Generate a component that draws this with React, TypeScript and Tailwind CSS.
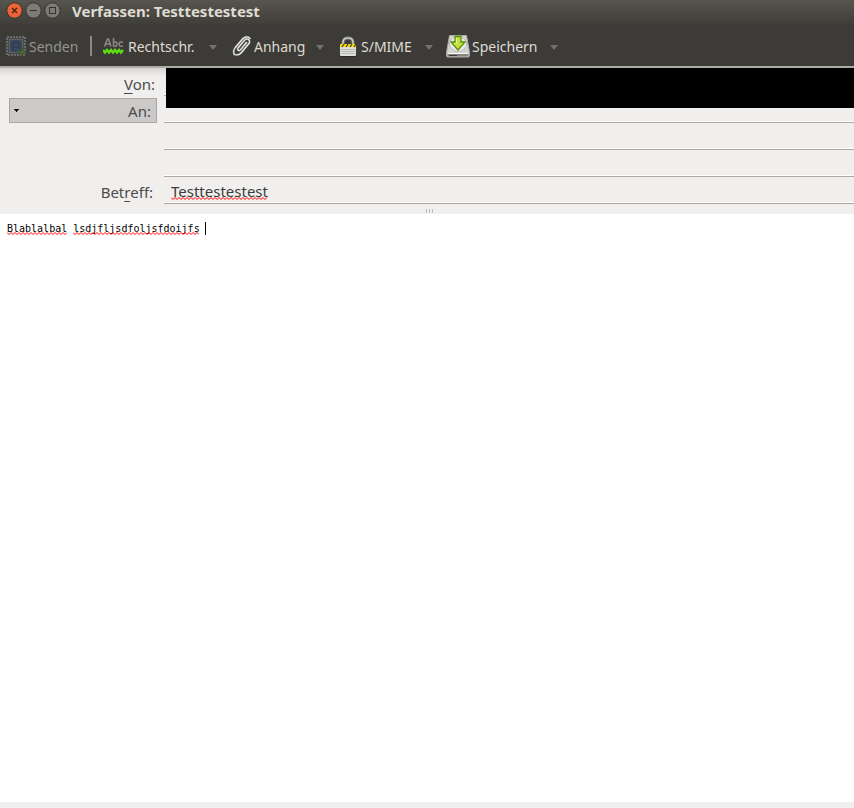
import React, { useState } from 'react';

const SendIcon = () => (
  <svg width="20" height="20" viewBox="0 0 20 20" className="shrink-0">
    <rect x="1" y="1" width="18" height="18" fill="#4a4945" stroke="#6b6964" strokeWidth="2" strokeDasharray="2 1" />
    <rect x="3.500" y="3.500" width="13" height="13" fill="#414d5e" stroke="#566273" />
    <path
      d="M12.500 7.500v4q.5 1.500 2 .5 1.200-5.500-3-7-5-.8-6 4 0 5.500 4.500 6"
      fill="none"
      stroke="#2c3b52"
      strokeWidth="1.200"
    />
    <circle cx="10" cy="9.500" r="2.300" fill="none" stroke="#2c3b52" strokeWidth="1.200" />
    <path d="M12 15h3.500v-3l4.500 4.300-4.500 3.700v-2.500H12z" fill="#4b6636" stroke="#3a502b" strokeWidth="0.700" />
  </svg>
);

const SpellIcon = () => (
  <svg width="21" height="18" viewBox="0 0 21 18" className="shrink-0">
    <g fill="none" stroke="#8b8a87" strokeWidth="1.500">
      <path d="M1.500 9.500L4.500 2h1L8 9.500M3 7h4" />
      <path d="M10.500 1v8.500M10.500 5h2q1.500 0 1.500 2t-1.500 2.300h-2" />
      <path d="M20 5h-2q-1.800 0-1.800 2.200T18 9.300h2" />
    </g>
    <path d="M0 13l2 2.500 2-2.500 2 2.500 2-2.500 2 2.500 2-2.500 2 2.500 2-2.500 2 2.500 2-2.500" fill="none" stroke="#5fdc13" strokeWidth="2.400" />
  </svg>
);

const ClipIcon = () => (
  <svg width="20" height="22" viewBox="0 0 20 22" className="shrink-0">
    <g fill="none" strokeLinecap="round" strokeLinejoin="round">
      <path
        d="M14.500 7.500l-6 7.300q-1.200 1.200-2.300.4t-.2-2.200l7-8.300q1.800-1.500 3.500-.2t.8 3.500l-7.800 9.500q-2 2.300-4.500 2.500l-2.800-.5-.6-3q.2-2 1.700-4l7.700-9q2.500-2.300 5-1.500l2 1.500"
        stroke="#6f6e69"
        strokeWidth="2.200"
      />
      <path
        d="M14.500 7.500l-6 7.300q-1.200 1.200-2.300.4t-.2-2.200l7-8.300q1.800-1.500 3.500-.2t.8 3.500l-7.800 9.500q-2 2.300-4.500 2.500l-2.800-.5-.6-3q.2-2 1.700-4l7.700-9q2.500-2.300 5-1.500l2 1.500"
        stroke="#eeeeec"
        strokeWidth="1.200"
      />
    </g>
  </svg>
);

const LockIcon = () => (
  <svg width="18" height="21" viewBox="0 0 18 21" className="shrink-0">
    <path d="M4 9V6.500Q4 2 9 2t5 4.500V9" fill="none" stroke="#858580" strokeWidth="2.800" />
    <path d="M4 9V6.500Q4 2 9 2t5 4.500V9" fill="none" stroke="#d7d7d3" strokeWidth="1.200" />
    <rect x="1" y="8" width="16" height="12" rx="1" fill="#dededb" />
    <path d="M2 13.500h14M2 15.500h14M2 17.500h14" stroke="#b9b8b4" />
    <rect x="1" y="8" width="16" height="3" fill="#f3d91b" />
    <path d="M3 11l2-3M7 11l2-3M11 11l2-3M15 11l2-3" stroke="#4b4414" strokeWidth="1.300" />
    <path d="M1 20.500h16" stroke="#292825" />
  </svg>
);

const SaveIcon = () => (
  <svg width="24" height="23" viewBox="0 0 24 23" className="shrink-0">
    <path d="M3.500.5h17l3 17v3q0 1.500-1.500 1.500H2Q.5 22 .5 20.500v-3z" fill="#d5d5d2" stroke="#aaa9a6" />
    <ellipse cx="12" cy="9" rx="8.500" ry="7.500" fill="#e8e8e6" stroke="#babab7" />
    <path d="M1.500 18.500h21v2q0 1-1 1h-19q-1 0-1-1z" fill="#85847f" />
    <path d="M2 18.500h20" stroke="#f5f5f3" />
    <path d="M3 20.500h8" stroke="#3d3c38" />
    <path d="M9 1.500h6v5.500h4l-7 8-7-8h4z" fill="#c6df3c" stroke="#55920c" strokeWidth="1.300" />
    <path d="M10.500 3v5.500H8.500" fill="none" stroke="#eaf49b" />
  </svg>
);

const DropArrow = () => (
  <svg width="8" height="5" viewBox="0 0 8 5">
    <path d="M0 0h8L4 5z" fill="#73716c" />
  </svg>
);

interface ToolProps {
  icon: React.ReactNode;
  label: string;
  className: string;
  gap: string;
}

const Tool: React.FC<ToolProps> = ({ icon, label, className, gap }) => (
  <div className={`flex items-center justify-between ${className}`}>
    <button type="button" className={`flex h-8 items-center text-[#dfdbd2] ${gap}`}>
      {icon}
      <span className="pt-[2px]">{label}</span>
    </button>
    <button type="button" aria-label={`${label} Optionen`} className="flex h-8 items-center pt-[2px]">
      <DropArrow />
    </button>
  </div>
);

// zigzag line drawn under misspelled words
const Squiggle = ({ width, className = '' }: { width: number; className?: string }) => {
  const points = [];
  for (let x = 0; x <= width; x += 2) {
    points.push(`${x},${x % 4 === 0 ? 0.5 : 2.5}`);
  }
  return (
    <svg width={width} height="3" className={`shrink-0 ${className}`} aria-hidden="true">
      <polyline points={points.join(' ')} fill="none" stroke="#ff0000" strokeWidth="1" />
    </svg>
  );
};

const fieldClass =
  'block h-[27px] w-full border-b border-[#aaa9a7] bg-transparent px-[7px] pt-[2px] text-[#3c3c3c] shadow-[inset_0_-1px_0_#ffffff] outline-none';

export default function App() {
  const [subject, setSubject] = useState('Testtestestest');
  const [body, setBody] = useState('Blablalbal lsdjfljsdfoljsfdoijfs ');
  const [recipients, setRecipients] = useState(['', '', '']);

  const setRecipient = (index: number, value: string) =>
    setRecipients(recipients.map((r, i) => (i === index ? value : r)));

  return (
    <div className="flex min-h-screen flex-col bg-white font-['Noto_Sans',sans-serif] text-[14px] leading-5">
      <header className="border-b-2 border-[#aeaca7] bg-[#3c3b37]">
        <div className="flex h-6 items-center gap-[11px] bg-linear-to-b from-[#56554e] to-[#3f3e39] px-[6px] pb-[3px]">
          <div className="flex gap-[2px]">
            <button type="button" aria-label="Schließen">
              <svg width="17" height="17" viewBox="0 0 17 17">
                <circle cx="8.500" cy="8.500" r="7.700" fill="#ee6338" stroke="#34332e" />
                <path d="M6 6l5 5M11 6l-5 5" stroke="#4a2315" strokeWidth="1.400" />
              </svg>
            </button>
            <button type="button" aria-label="Minimieren">
              <svg width="17" height="17" viewBox="0 0 17 17">
                <circle cx="8.500" cy="8.500" r="7.700" fill="#7d7b73" stroke="#34332e" />
                <path d="M5 8.500h7" stroke="#33322e" />
              </svg>
            </button>
            <button type="button" aria-label="Maximieren">
              <svg width="17" height="17" viewBox="0 0 17 17">
                <circle cx="8.500" cy="8.500" r="7.700" fill="#7d7b73" stroke="#34332e" />
                <rect x="5.500" y="5.500" width="6" height="6" fill="none" stroke="#33322e" />
              </svg>
            </button>
          </div>
          <h1 className="text-[15px] font-bold text-[#dfdbd2]">Verfassen: Testtestestest</h1>
        </div>
        <div className="flex h-[42px] items-center pl-[6px] pt-[2px]">
          <button type="button" disabled className="flex h-8 w-[84px] items-center gap-[3px] text-[#96938c]">
            <SendIcon />
            <span className="pt-[2px]">Senden</span>
          </button>
          <div className="mr-[11px] h-5 w-[2px] bg-[#8b8984]" />
          <div className="flex gap-[15px]">
            <Tool icon={<SpellIcon />} label="Rechtschr." className="w-[114px]" gap="gap-1" />
            <Tool icon={<ClipIcon />} label="Anhang" className="w-[92px]" gap="gap-[2px]" />
            <Tool icon={<LockIcon />} label="S/MIME" className="w-[94px]" gap="gap-1" />
            <Tool icon={<SaveIcon />} label="Speichern" className="-ml-[2px] w-[112px]" gap="gap-[2px]" />
          </div>
        </div>
      </header>

      <section className="relative bg-[#f0efed] pt-px text-[15px] text-[#4c4c4c]">
        <div className="absolute inset-x-0 top-0 h-2 bg-linear-to-b from-[#d5d4d2] to-[#f0efed]" />
        <div className="relative grid grid-cols-[157px_1fr] gap-x-[7px]">
          <label htmlFor="from" className="pr-[2px] pt-[5px] text-right">
            <span className="underline underline-offset-3">V</span>on:
          </label>
          <input id="from" className={fieldClass} />

          <div className="relative pl-[9px] pt-[2px]">
            <select
              aria-label="Empfängerart"
              className="h-[25px] w-full appearance-none border border-[#a9a8a6] bg-[#cbcac9] pr-[5px] [text-align-last:right]"
            >
              <option>An:</option>
              <option>CC:</option>
              <option>BCC:</option>
            </select>
            <svg width="5" height="3" viewBox="0 0 5 3" className="pointer-events-none absolute left-[14px] top-[13px]">
              <path d="M0 0h5v1H4v1H3v1H2V2H1V1H0z" fill="#111111" />
            </svg>
          </div>
          <div className="row-span-3">
            {recipients.map((recipient, index) => (
              <input
                key={index}
                aria-label={`Empfänger ${index + 1}`}
                value={recipient}
                onChange={(e) => setRecipient(index, e.target.value)}
                className={fieldClass}
              />
            ))}
          </div>

          <label htmlFor="subject" className="col-start-1 row-start-5 pr-1 pt-[5px] text-right">
            Bet<span className="underline underline-offset-3">r</span>eff:
          </label>
          <div className="relative col-start-2 row-start-5">
            <input
              id="subject"
              value={subject}
              onChange={(e) => setSubject(e.target.value)}
              spellCheck={false}
              className={fieldClass}
            />
            <Squiggle width={97} className="pointer-events-none absolute bottom-1 left-[7px]" />
          </div>
        </div>
        <div className="flex h-[10px] items-center justify-center gap-[2px] pl-[5px] pt-[4px]">
          <span className="h-1 w-px bg-[#bdbcba]" />
          <span className="h-1 w-px bg-[#bdbcba]" />
          <span className="h-1 w-px bg-[#bdbcba]" />
        </div>
        <div className="absolute left-[166px] right-0 top-0 h-10 bg-black" />
      </section>

      <main className="relative flex grow flex-col">
        <textarea
          aria-label="Nachricht"
          value={body}
          onChange={(e) => setBody(e.target.value)}
          spellCheck={false}
          className="w-full grow resize-none px-[7px] py-2 font-['DejaVu_Sans_Mono',monospace] text-[10px] leading-[14px] text-black outline-none"
        />
        <div className="pointer-events-none absolute left-[7px] top-2 flex h-[13px] items-end gap-[6px]">
          <Squiggle width={60} />
          <Squiggle width={126} />
          <span className="h-[13px] w-px bg-black" />
        </div>
      </main>
      <footer className="h-[6px] bg-[#f0efed]" />
    </div>
  );
}
